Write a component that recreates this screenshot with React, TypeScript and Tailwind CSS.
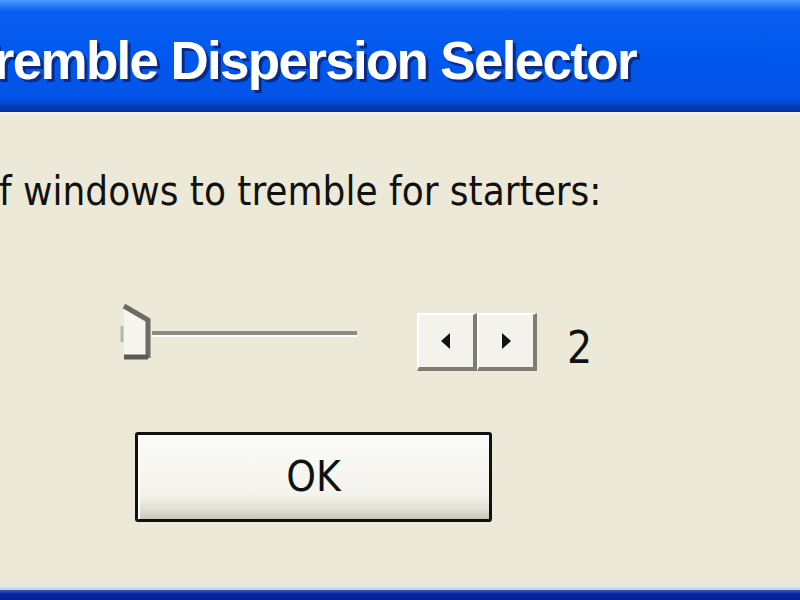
import React from 'react'

function SliderThumb() {
  return (
    <svg width="40" height="62" viewBox="0 0 40 62" className="block">
      <path d="M6 8 L30 22 L30 60 L6 60 Z" fill="#f6f5ef" />
      <path d="M6 8 L30 22 L30 60" fill="none" stroke="#6e6c60" strokeWidth="5" />
      <path d="M6 59 L30 59" stroke="#5c5a50" strokeWidth="5" />
      <path d="M4 28 L4 44" stroke="#b8b6aa" strokeWidth="3" />
    </svg>
  )
}

function SpinButton({ dir }: { dir: 'left' | 'right' }) {
  return (
    <div className="w-[60px] h-[58px] bg-[#f3f2ec] border-t-2 border-l-2 border-t-white border-l-white border-r-[4px] border-b-[4px] border-r-[#7f7d72] border-b-[#7f7d72] flex items-center justify-center">
      <svg width="12" height="16" viewBox="0 0 12 16">
        {dir === 'left' ? (
          <path d="M10 0 L1 8 L10 16 Z" fill="#111" />
        ) : (
          <path d="M2 0 L11 8 L2 16 Z" fill="#111" />
        )}
      </svg>
    </div>
  )
}

export default function App() {
  return (
    <div className="w-[800px] h-[600px] overflow-hidden flex flex-col bg-[#ECE9D8] font-['DejaVu_Sans_Condensed','DejaVu_Sans',sans-serif]">
      {/* Title bar */}
      <div className="h-[112px] shrink-0 pt-[34px] bg-[linear-gradient(to_bottom,#4b9bff_0%,#2a7cf6_5%,#0a5ff0_10%,#0058ee_50%,#0554e8_86%,#0446cf_92%,#00309f_100%)] overflow-hidden">
        <div className="ml-[-34px] whitespace-nowrap text-white font-bold text-[53px] leading-none tracking-[-1.7px] [text-shadow:3px_3px_0_#0a2a8a] font-['Liberation_Sans',sans-serif]">
          Tremble Dispersion Selector
        </div>
      </div>
      <div className="h-[3px] shrink-0 bg-[#f3f1e6]" />

      {/* Body */}
      <div className="flex-1 flex flex-col overflow-hidden">
        <p className="mt-[56px] ml-[-23px] whitespace-nowrap text-[40px] leading-none text-[#111]">
          of windows to tremble for starters:
        </p>

        <div className="mt-[87px] flex items-start">
          <div className="ml-[118px] flex items-start">
            <SliderThumb />
            <div className="w-[205px] h-[6px] ml-[-6px] mt-[33px] bg-[#8e8c80] border-b-2 border-b-white" />
          </div>
          <div className="ml-[60px] mt-[15px] flex">
            <SpinButton dir="left" />
            <SpinButton dir="right" />
          </div>
          <span className="ml-[30px] mt-[28px] text-[44px] leading-none text-[#111]">2</span>
        </div>

        <button className="mt-[61px] ml-[135px] w-[357px] h-[90px] rounded-[3px] border-[3px] border-[#111] bg-[linear-gradient(to_bottom,#fbfbf7_0%,#f4f3ee_70%,#e2e0d4_88%,#c9c7b8_100%)] shadow-[inset_2px_2px_0_#ffffff] flex items-center justify-center text-[42px] leading-none text-[#111]">
          OK
        </button>
      </div>

      {/* Bottom frame */}
      <div className="h-[4px] shrink-0 bg-[linear-gradient(to_bottom,#e4e8f0,#b8c8f0)]" />
      <div className="h-[10px] shrink-0 bg-[linear-gradient(to_bottom,#3c5cc0,#08249a_40%,#00209a)]" />
    </div>
  )
}
